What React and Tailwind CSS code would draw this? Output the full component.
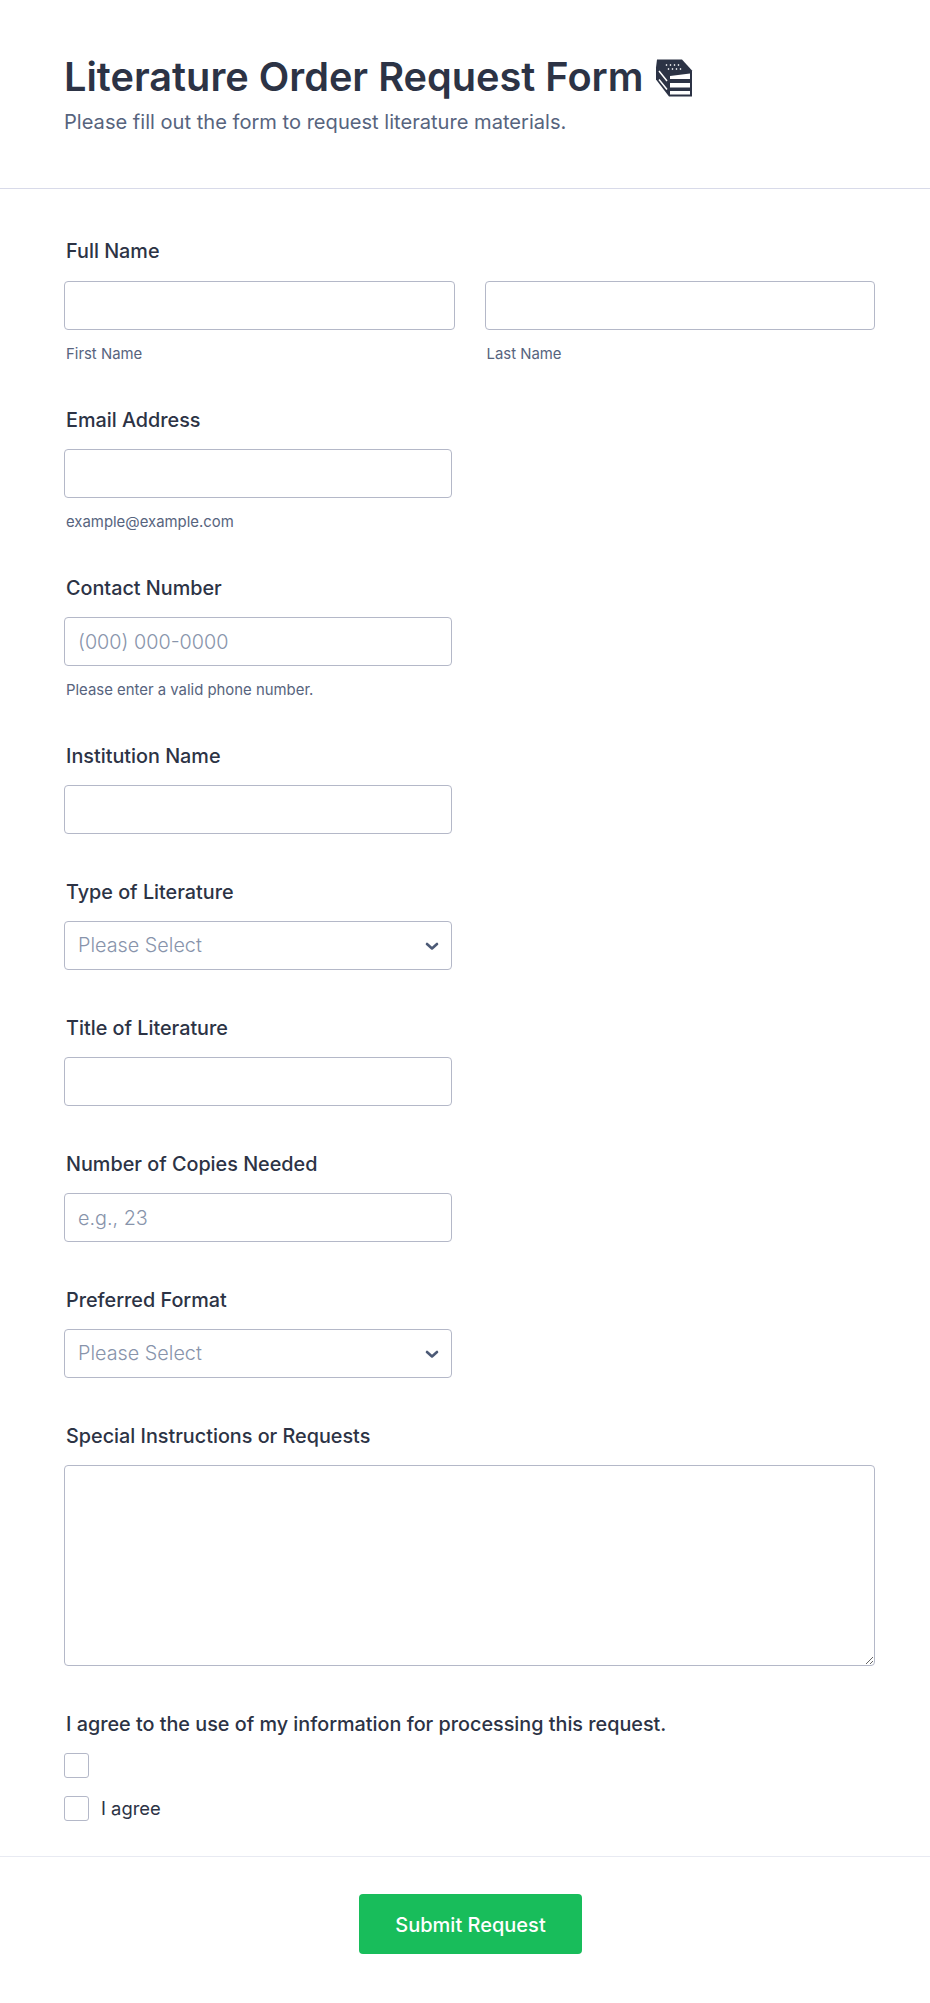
const inputCls = "block w-full h-[49px] rounded-[4px] border border-[#b4b8c8] bg-white pl-[13px] pr-3 text-[19.8px] font-light text-[#2c3345] placeholder:text-[#8894ab] outline-none";

function Label({ children, first }) {
  return <label className={"block pl-0.5 text-[19.8px] font-[450] text-[#2c3345] " + (first ? "leading-[28px] mb-4" : "leading-[30px] mb-[14px]")}>{children}</label>;
}

function Sub({ children }) {
  return <p className="mt-[15px] -mb-[2px] pl-0.5 text-[14.9px] leading-[19px] text-[#57647e]">{children}</p>;
}

function Chevron() {
  return (
    <svg className="absolute right-[13px] top-[21px] pointer-events-none" width="14" height="9" viewBox="0 0 14 9" fill="none">
      <path d="M2 2l5 4.5L12 2" stroke="#4c5a76" strokeWidth="2.6" strokeLinecap="round" strokeLinejoin="round" />
    </svg>
  );
}

function Books() {
  return (
    <svg className="inline-block align-baseline ml-[12px] -mb-[8px]" width="38" height="41" viewBox="0 0 38 40">
      <path d="M2 1H27L37 12V38H14L1 21V9Z" fill="#2c3345" />
      <path d="M15 17.5L35 15V20.5H15Z" fill="#fff" />
      <path d="M15 24.5H35V29H15Z" fill="#fff" />
      <path d="M15 32.5H35V36H15Z" fill="#fff" />
      <path d="M4 12.5L12 22.5M4 21L12 31" stroke="#fff" strokeWidth="1.5" fill="none" />
      <path d="M11 6l1 1M15 6l1 1M19 6l1 1M23 6l1 1M13 10l1 1M17 10l1 1M21 10l1 1M25 10l1 1" stroke="#fff" strokeWidth="1.5" fill="none" />
    </svg>
  );
}

function Field({ label, children, sub }) {
  return (
    <div>
      <Label>{label}</Label>
      <div className="w-[388px]">{children}</div>
      {sub && <Sub>{sub}</Sub>}
    </div>
  );
}

function SelectBox() {
  return (
    <div className="relative">
      <select defaultValue="" className={inputCls + " appearance-none !text-[#8894ab] pt-[1px]"}>
        <option value="">Please Select</option>
      </select>
      <Chevron />
    </div>
  );
}

export default function App() {
  return (
    <div className="min-h-[2003px] bg-white font-['Inter','Liberation_Sans',sans-serif]">
      <header className="h-[189px] border-b border-[#d8dae9] px-16 pt-[52px]">
        <h1 className="text-[39.7px] leading-[50px] font-semibold text-[#2c3345]">Literature Order Request Form<Books /></h1>
        <p className="mt-2 text-[20.1px] leading-[24px] text-[#57647e]">Please fill out the form to request literature materials.</p>
      </header>
      <main className="flex flex-col gap-[43px] px-16 pt-[48px]">
        <div>
          <Label first>Full Name</Label>
          <div className="flex gap-[30px] w-[811px]">
            <div className="flex-1">
              <input className={inputCls} />
              <Sub>First Name</Sub>
            </div>
            <div className="flex-1">
              <input className={inputCls} />
              <Sub>Last Name</Sub>
            </div>
          </div>
        </div>
        <Field label="Email Address" sub="example@example.com"><input className={inputCls} /></Field>
        <Field label="Contact Number" sub="Please enter a valid phone number."><input className={inputCls} placeholder="(000) 000-0000" /></Field>
        <Field label="Institution Name"><input className={inputCls} /></Field>
        <Field label="Type of Literature"><SelectBox /></Field>
        <Field label="Title of Literature"><input className={inputCls} /></Field>
        <Field label="Number of Copies Needed"><input className={inputCls} placeholder="e.g., 23" /></Field>
        <Field label="Preferred Format"><SelectBox /></Field>
        <div>
          <Label>Special Instructions or Requests</Label>
          <textarea className="block w-[811px] h-[201px] rounded-[4px] border border-[#b4b8c8] bg-white px-3 py-2 text-[18px] outline-none" />
        </div>
        <div>
          <Label>I agree to the use of my information for processing this request.</Label>
          <div className="flex flex-col gap-[18px]">
            <div className="w-[25px] h-[25px] rounded-[3px] border border-[#b4b8c8]" />
            <div className="flex items-center gap-3">
              <div className="w-[25px] h-[25px] rounded-[3px] border border-[#b4b8c8]" />
              <span className="text-[18.4px] leading-[25px] text-[#2c3345]">I agree</span>
            </div>
          </div>
        </div>
      </main>
      <footer className="mt-[35px] flex justify-center border-t border-[#e8eaf2] pt-[37px]">
        <button className="ml-[11px] w-[223px] h-[60px] rounded-[4px] bg-[#18bd5b] pt-[2px] text-[20px] font-[450] text-white">Submit Request</button>
      </footer>
    </div>
  );
}
